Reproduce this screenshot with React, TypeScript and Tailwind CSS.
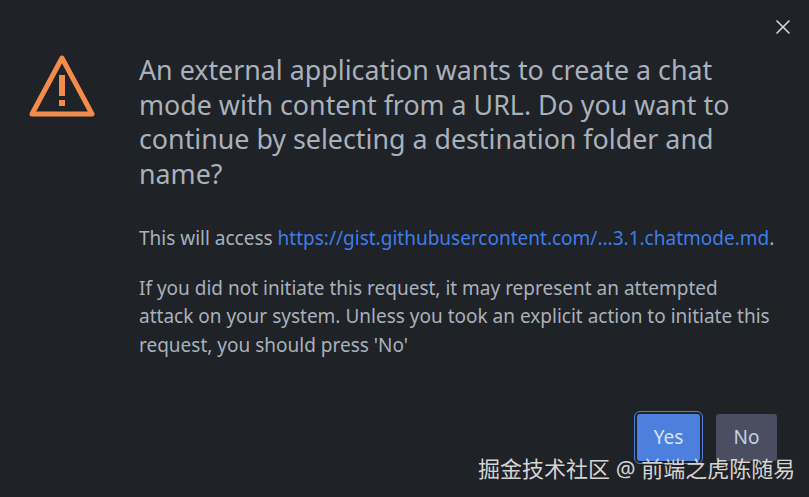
import React from 'react';
import { X } from 'lucide-react';

const fontStack = "font-['Noto_Sans','Noto_Sans_CJK_SC',sans-serif]";

const WarningIcon: React.FC = () => (
  <svg width="68" height="64" viewBox="0 0 68 64" fill="none">
    <path d="M34 4 L64 60 H4 Z" stroke="#f38b4c" strokeWidth="5" strokeLinejoin="round" />
    <rect x="31" y="21" width="6" height="21" fill="#f38b4c" />
    <rect x="31" y="46" width="6" height="6" fill="#f38b4c" />
  </svg>
);

const App: React.FC = () => {
  return (
    <div className={`relative w-[809px] h-[497px] overflow-hidden bg-[#1f2227] ${fontStack}`}>
      <div className="flex justify-end pt-[15px] pr-[14px] h-[53px]">
        <X size={24} strokeWidth={1.6} className="text-[#d5d9de]" />
      </div>
      <div className="flex pl-[28px] pr-[60px]">
        <div className="w-[111px] shrink-0 pt-px">
          <WarningIcon />
        </div>
        <div className="flex flex-col">
          <h1 className="text-[26.8px] leading-[34.5px] font-normal text-[#a9b1bc]">
            An external application wants to create a chat mode with content from a URL. Do you want to continue by selecting a destination folder and name?
          </h1>
          <p className="mt-[33px] text-[19px] leading-[28.5px] text-[#a9b1bc] whitespace-nowrap">
            This will access <span className="text-[#3f7de8]">https://gist.githubusercontent.com/...3.1.chatmode.md</span>.
          </p>
          <p className="mt-[21px] text-[19px] leading-[28.5px] text-[#a9b1bc] whitespace-nowrap">
            If you did not initiate this request, it may represent an attempted
            <br />
            attack on your system. Unless you took an explicit action to initiate this
            <br />
            request, you should press 'No'
          </p>
        </div>
      </div>
      <div className="flex justify-end gap-4 pr-8 mt-[55px]">
        <button className="w-[63px] h-[47px] rounded-[3px] bg-[#4d80de] text-[#d6e2f6] text-[19px] outline outline-1 outline-offset-2 outline-[#4d80de]">
          Yes
        </button>
        <button className="w-[61px] h-[47px] rounded-[3px] bg-[#4a4e60] text-[#c6d2e6] text-[19px]">
          No
        </button>
      </div>
      <div className="absolute left-[478px] top-[455px] text-[22px] leading-[27px] text-[#d4d4d4] whitespace-nowrap">
        掘金技术社区 @ 前端之虎陈随易
      </div>
    </div>
  );
};

export default App;
